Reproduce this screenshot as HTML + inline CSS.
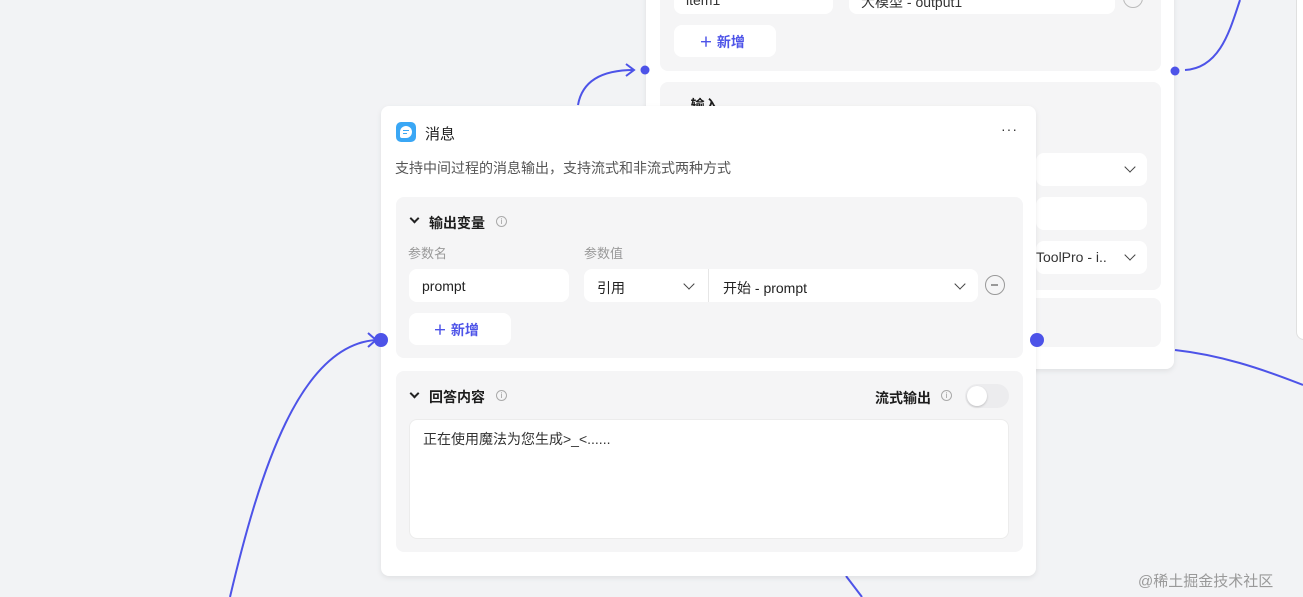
<!DOCTYPE html>
<html><head><meta charset="utf-8"><style>
*{box-sizing:border-box;margin:0;padding:0}
body{width:1303px;height:597px;overflow:hidden;position:relative;background:#f2f3f5;font-family:"Liberation Sans","Noto Sans CJK SC",sans-serif}
.abs{position:absolute}
.card{background:#fff;border-radius:8px;box-shadow:0 2px 6px rgba(0,0,0,.08)}
.sec{background:#f5f5f6;border-radius:8px}
.inp{background:#fff;border-radius:8px;font-size:14px;color:#222}
.chev{width:8px;height:8px;border-right:1.6px solid #444;border-bottom:1.6px solid #444;transform:rotate(45deg)}
.hchev{width:7px;height:7px;border-right:2px solid #222;border-bottom:2px solid #222;transform:rotate(45deg)}
.bold{font-weight:bold;font-size:14px;color:#1d1d1d}
.info{width:11px;height:11px;border:1px solid #aaa;border-radius:50%;font-size:8px;color:#999;text-align:center;line-height:9px}
.add{color:#4d53e8;font-weight:bold;font-size:14px}
</style></head><body>
<svg class="abs" style="left:0;top:0" width="1303" height="597">
<g fill="none" stroke="#4d53e8" stroke-width="2">
<path d="M230 597 C260 470 300 345 376 340"/>
<path d="M578 105 C582 82 600 70 634 70"/>
<path d="M626 64 L634 70 L626 76"/>
<path d="M1185 70 C1220 68 1230 30 1240 0"/>
<path d="M1175 350 C1220 355 1260 368 1303 385"/>
<path d="M846 576 L862 597"/>
</g>
</svg>
<div class="abs" style="left:1296px;top:-10px;width:20px;height:350px;background:#fff;border:1px solid #e0e0e0;border-radius:8px"></div>
<!-- back card -->
<div class="abs card" style="left:646px;top:-20px;width:528px;height:389px"></div>
<div class="abs sec" style="left:660px;top:-20px;width:501px;height:91px"></div>
<div class="abs inp" style="left:674px;top:-20px;width:159px;height:34px;padding:12px 12px;font-size:14px;color:#333">item1</div>
<div class="abs inp" style="left:849px;top:-20px;width:266px;height:34px;padding:12px 12px;color:#333">大模型 - output1</div>
<div class="abs" style="left:1123px;top:-12px;width:20px;height:20px;border:1.5px solid #bbb;border-radius:50%"></div>
<div class="abs" style="left:674px;top:25px;width:102px;height:32px;background:#fff;border-radius:8px;padding:7px 0 0 25px"><span class="add">＋ 新增</span></div>
<div class="abs sec" style="left:660px;top:82px;width:501px;height:208px"></div>
<div class="abs bold" style="left:675px;top:95px">⌄ 输入</div>
<div class="abs inp" style="left:1036px;top:153px;width:111px;height:33px"><div class="chev abs" style="left:90px;top:10px"></div></div>
<div class="abs inp" style="left:1036px;top:197px;width:111px;height:33px"></div>
<div class="abs inp" style="left:1036px;top:241px;width:111px;height:33px;padding:8px 0 0 0;color:#333">ToolPro - i..<div class="chev abs" style="left:90px;top:10px"></div></div>
<div class="abs sec" style="left:660px;top:298px;width:501px;height:49px"></div>
<!-- front card -->
<div class="abs card" style="left:381px;top:106px;width:655px;height:470px"></div>
<div class="abs" style="left:396px;top:122px;width:20px;height:20px;background:#3aa7f5;border-radius:5px"><div style="margin:4px 0 0 4px;width:12px;height:12px;background:#fff;border-radius:6px 6px 6px 2px;padding:4px 3px 0"><div style="height:1px;background:#3aa7f5;margin-bottom:2px"></div><div style="height:1px;width:4px;background:#3aa7f5"></div></div></div>
<div class="abs" style="left:425px;top:123px;font-size:15px;color:#222">消息</div>
<div class="abs" style="left:1001px;top:121px;font-size:14px;color:#333;letter-spacing:1px">···</div>
<div class="abs" style="left:395px;top:158px;font-size:14px;color:#555">支持中间过程的消息输出，支持流式和非流式两种方式</div>
<div class="abs sec" style="left:396px;top:197px;width:627px;height:161px"></div>
<div class="abs hchev" style="left:411px;top:215px"></div>
<div class="abs bold" style="left:429px;top:213px">输出变量</div>
<div class="abs info" style="left:496px;top:216px">i</div>
<div class="abs" style="left:408px;top:243px;font-size:13px;color:#999">参数名</div>
<div class="abs" style="left:584px;top:243px;font-size:13px;color:#999">参数值</div>
<div class="abs inp" style="left:409px;top:269px;width:160px;height:33px;padding:9px 13px">prompt</div>
<div class="abs inp" style="left:584px;top:269px;width:394px;height:33px"></div>
<div class="abs" style="left:708px;top:269px;width:1px;height:33px;background:#e6e6e6"></div>
<div class="abs" style="left:597px;top:278px;font-size:14px;color:#222">引用</div>
<div class="abs chev" style="left:685px;top:280px"></div>
<div class="abs" style="left:723px;top:278px;font-size:14px;color:#222">开始 - prompt</div>
<div class="abs chev" style="left:956px;top:280px"></div>
<div class="abs" style="left:985px;top:275px;width:20px;height:20px;border:1.5px solid #999;border-radius:50%"><div style="margin:8px 0 0 5px;width:7px;height:1.5px;background:#999"></div></div>
<div class="abs" style="left:409px;top:313px;width:102px;height:32px;background:#fff;border-radius:8px;padding:7px 0 0 24px"><span class="add">＋ 新增</span></div>
<div class="abs sec" style="left:396px;top:371px;width:627px;height:181px"></div>
<div class="abs hchev" style="left:411px;top:390px"></div>
<div class="abs bold" style="left:429px;top:387px">回答内容</div>
<div class="abs info" style="left:496px;top:390px">i</div>
<div class="abs bold" style="left:875px;top:388px">流式输出</div>
<div class="abs info" style="left:941px;top:390px">i</div>
<div class="abs" style="left:965px;top:384px;width:44px;height:24px;background:#ececee;border-radius:12px"><div style="margin:2px;width:20px;height:20px;background:#fff;border-radius:50%;box-shadow:0 1px 2px rgba(0,0,0,.2)"></div></div>
<div class="abs inp" style="left:409px;top:419px;width:600px;height:120px;border:1px solid #ececec;padding:9px 13px;color:#333">正在使用魔法为您生成&gt;_&lt;......</div>
<svg class="abs" style="left:0;top:0" width="1303" height="597">
<g fill="none" stroke="#4d53e8" stroke-width="2"><path d="M368 333 L376 340 L368 347"/></g>
<g fill="#4d53e8"><circle cx="645" cy="70" r="4.5"/><circle cx="1175" cy="71" r="4.5"/><circle cx="381" cy="340" r="7"/><circle cx="1037" cy="340" r="7"/></g>
</svg>
<div class="abs" style="left:1138px;top:570px;font-size:15px;color:#999">@稀土掘金技术社区</div>
</body></html>
